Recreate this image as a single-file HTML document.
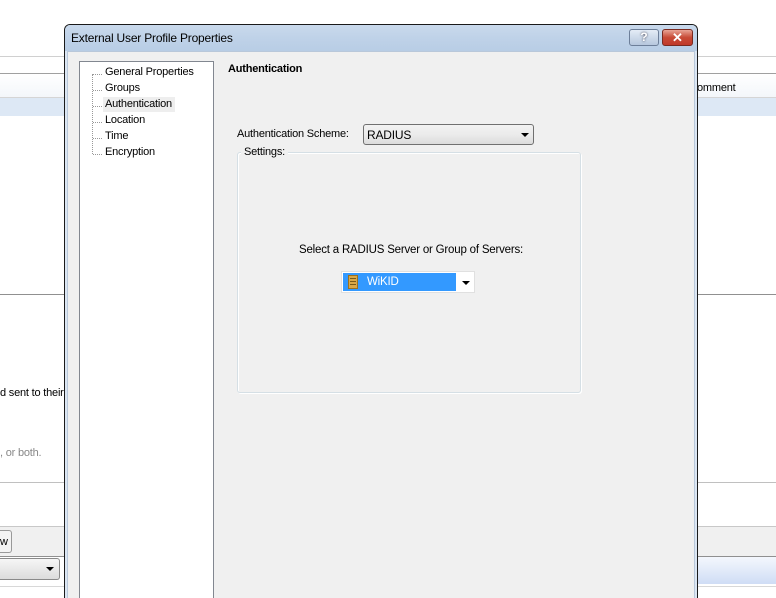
<!DOCTYPE html>
<html style="width:776px;height:598px;overflow:hidden"><head><style>
*{margin:0;padding:0;box-sizing:border-box}
body{width:776px;height:598px;overflow:hidden;background:#fff;position:relative;font-family:"Liberation Sans",sans-serif;font-size:11px;color:#000}
.a{position:absolute}
.t{position:absolute;white-space:nowrap;font-size:11px;letter-spacing:-0.2px}
</style></head><body>
<div class="a" style="left:0;top:56px;width:776px;height:1px;background:#d0d0d0"></div>
<div class="a" style="left:0;top:73px;width:776px;height:1px;background:#a0a0a0"></div>
<div class="a" style="left:0;top:74px;width:776px;height:24px;background:linear-gradient(#fff,#f3f6fa)"></div>
<div class="a" style="left:0;top:97px;width:776px;height:1px;background:#d5d5d5"></div>
<div class="a" style="left:0;top:98px;width:776px;height:18px;background:#dde8f5"></div>
<div class="t" style="left:697px;top:82px">omment</div>
<div class="a" style="left:0;top:294px;width:776px;height:1px;background:#909090"></div>
<div class="t" style="left:0;top:387px">d sent to their</div>
<div class="t" style="left:0;top:447px;color:#888">, or both.</div>
<div class="a" style="left:0;top:482px;width:776px;height:1px;background:#c0c0c0"></div>
<div class="a" style="left:0;top:526px;width:776px;height:30px;background:#f0f0f0;border-top:1px solid #c8c8c8"></div>
<div class="a" style="left:0;top:556px;width:776px;height:1px;background:#909090"></div>
<div class="a" style="left:0;top:530px;width:12px;height:23px;background:#f3f3f3;border:1px solid #999;border-left:none;border-radius:0 3px 3px 0"></div>
<div class="t" style="left:0;top:536px">w</div>
<div class="a" style="left:0;top:558px;width:60px;height:22px;background:linear-gradient(#f6f6f6,#dcdcdc);border:1px solid #8a8a8a;border-left:none;border-radius:0 3px 3px 0"></div>
<div class="a" style="left:46px;top:567px;border-left:4px solid transparent;border-right:4px solid transparent;border-top:4px solid #000"></div>
<div class="a" style="left:698px;top:557px;width:78px;height:27px;background:linear-gradient(#f4f7fd,#cfddf5)"></div>
<div class="a" style="left:0;top:586px;width:776px;height:1px;background:#d8d8d8"></div>
<!-- dialog -->
<div class="a" style="left:64px;top:24px;width:634px;height:574px;border:1px solid #1a1a1a;border-bottom:none;border-radius:6px 6px 0 0;background:#dbe6f3"></div>
<div class="a" style="left:65px;top:25px;width:632px;height:26px;border-radius:5px 5px 0 0;background:linear-gradient(#c9d9ec,#bfd2e8 50%,#b8cde5)"></div>
<div class="t" style="left:71px;top:31px;font-size:12px;color:#000">External User Profile Properties</div>
<div class="a" style="left:629px;top:29px;width:30px;height:17px;border:1px solid #6d7f99;border-radius:3px;background:linear-gradient(#e4ecf6,#b6c7dd);color:#fff;font-weight:bold;text-align:center;font-size:12px;line-height:15px;text-shadow:0 0 2px #334">?</div>
<div class="a" style="left:662px;top:29px;width:31px;height:17px;border:1px solid #7a2a20;border-radius:3px;background:linear-gradient(#e8a496,#c84a36 50%,#c0392a);color:#fff;font-weight:bold;text-align:center;font-size:13px;line-height:15px">✕</div>
<div class="a" style="left:67px;top:51px;width:628px;height:547px;background:#f0f0f0;border:1px solid #b9c8da;border-bottom:none"></div>
<!-- tree -->
<div class="a" style="left:79px;top:61px;width:135px;height:537px;background:#fff;border:1px solid #828790;border-bottom:none"></div>
<div class="a" style="left:92px;top:74px;height:80px;border-left:1px dotted #999"></div>
<div class="a" style="left:93px;top:74px;width:9px;border-top:1px dotted #999"></div>
<div class="a" style="left:93px;top:90px;width:9px;border-top:1px dotted #999"></div>
<div class="a" style="left:93px;top:106px;width:9px;border-top:1px dotted #999"></div>
<div class="a" style="left:93px;top:122px;width:9px;border-top:1px dotted #999"></div>
<div class="a" style="left:93px;top:138px;width:9px;border-top:1px dotted #999"></div>
<div class="a" style="left:93px;top:154px;width:9px;border-top:1px dotted #999"></div>
<div class="a" style="left:103px;top:97px;width:72px;height:15px;background:#eee"></div>
<div class="t" style="left:105px;top:66px">General Properties</div>
<div class="t" style="left:105px;top:82px">Groups</div>
<div class="t" style="left:105px;top:98px">Authentication</div>
<div class="t" style="left:105px;top:114px">Location</div>
<div class="t" style="left:105px;top:130px">Time</div>
<div class="t" style="left:105px;top:146px">Encryption</div>
<!-- right pane -->
<div class="t" style="left:228px;top:63px;font-weight:bold">Authentication</div>
<div class="t" style="left:237px;top:128px">Authentication Scheme:</div>
<div class="a" style="left:363px;top:124px;width:171px;height:21px;border:1px solid #707070;border-radius:3px;background:linear-gradient(#f2f2f2,#ebebeb 50%,#dcdcdc)"></div>
<div class="t" style="left:367px;top:128px;font-size:12px">RADIUS</div>
<div class="a" style="left:521px;top:133px;border-left:4px solid transparent;border-right:4px solid transparent;border-top:4px solid #000"></div>
<div class="a" style="left:237px;top:152px;width:344px;height:241px;border:1px solid #d5dfe5;border-radius:3px;box-shadow:inset 1px 1px 0 #fff,1px 1px 0 #fff"></div>
<div class="t" style="left:241px;top:146px;background:#f0f0f0;padding:0 3px">Settings:</div>
<div class="t" style="left:299px;top:244px;font-size:11.5px">Select a RADIUS Server or Group of Servers:</div>
<div class="a" style="left:341px;top:271px;width:134px;height:22px;background:#fff;border:1px solid #e0e0e0"></div>
<div class="a" style="left:343px;top:273px;width:113px;height:18px;background:#3399ff"></div>
<div class="a" style="left:348px;top:275px;width:10px;height:14px;background:#d9a848;border:1px solid #9a7020"></div>
<div class="a" style="left:350px;top:278px;width:6px;height:1px;background:#7a5a18;box-shadow:0 3px 0 #7a5a18,0 6px 0 #7a5a18"></div>
<div class="t" style="left:367px;top:276px;color:#fff;font-size:11.5px">WiKID</div>
<div class="a" style="left:462px;top:281px;border-left:4px solid transparent;border-right:4px solid transparent;border-top:4px solid #000"></div>
</body></html>
